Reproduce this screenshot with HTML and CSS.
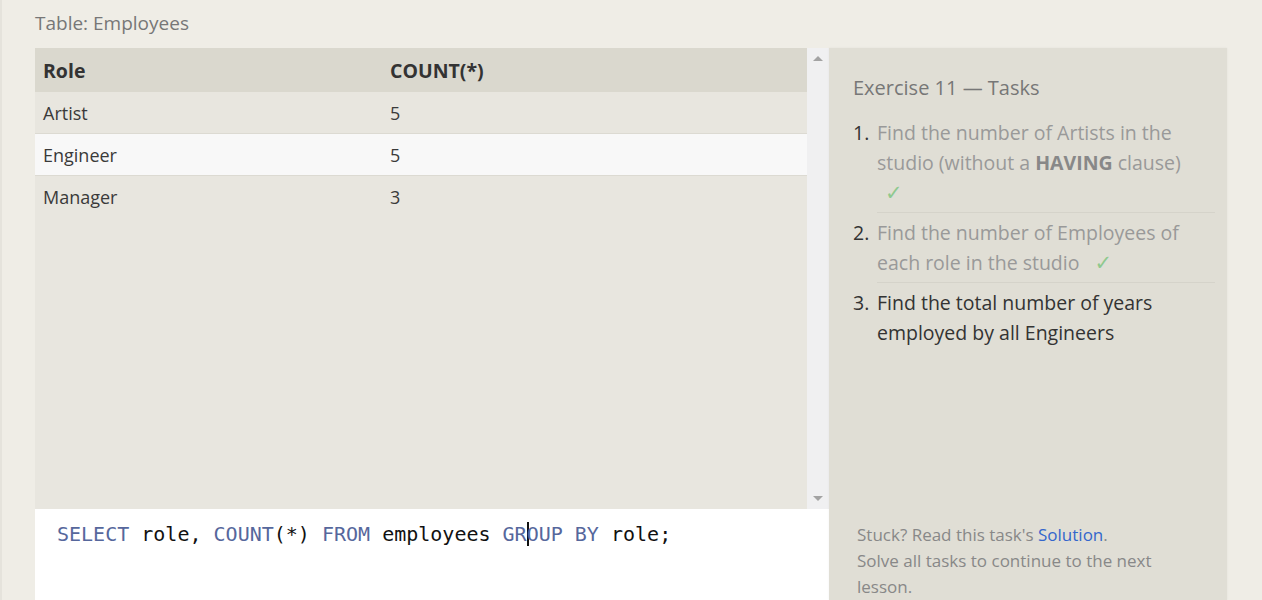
FILE: index.html
```html
<!DOCTYPE html>
<html>
<head>
<meta charset="utf-8">
<link rel="stylesheet" href="styles.css">
</head>
<body>
<div class="page">
  <div class="table-title">Table: Employees</div>
  <div class="workspace">
    <div class="left">
      <div class="results">
        <div class="table-wrap">
          <table class="grid">
            <thead>
              <tr><th class="c1">Role</th><th>COUNT(*)</th></tr>
            </thead>
            <tbody>
              <tr><td>Artist</td><td>5</td></tr>
              <tr class="hl"><td>Engineer</td><td>5</td></tr>
              <tr><td>Manager</td><td>3</td></tr>
            </tbody>
          </table>
        </div>
        <div class="scrollbar">
          <span class="arrow up"></span>
          <span class="arrow down"></span>
        </div>
      </div>
      <div class="editor">
        <div class="code"><span class="kw">SELECT</span> role, <span class="kw">COUNT</span>(*) <span class="kw">FROM</span> employees <span class="kw">GR<span class="cursor"></span>OUP</span> <span class="kw">BY</span> role;</div>
      </div>
    </div>
    <div class="panel">
      <div class="panel-title">Exercise 11 — Tasks</div>
      <ol class="tasks">
        <li class="done"><span class="num">1.</span><span class="txt">Find the number of Artists in the studio (without a <b>HAVING</b> clause)<br><span class="check">✓</span></span></li>
        <li class="done"><span class="num">2.</span><span class="txt">Find the number of Employees of each role in the studio <span class="check sp">✓</span></span></li>
        <li class="todo"><span class="num">3.</span><span class="txt">Find the total number of years employed by all Engineers</span></li>
      </ol>
      <div class="footer">
        Stuck? Read this task's <a class="link">Solution</a>.<br>
        Solve all tasks to continue to the next lesson.
      </div>
    </div>
  </div>
</div>
</body>
</html>
```
FILE: styles.css
```css
html, body {
  margin: 0;
  padding: 0;
  background: #efede6;
  overflow: hidden;
}
body {
  font-family: "Open Sans", "Liberation Sans", sans-serif;
  color: #333;
  border-left: 2px solid #e5e3dc;
  height: 600px;
}
.page {
  padding-left: 33px;
}
.table-title {
  font-size: 19px;
  line-height: 26px;
  color: #777;
  padding-top: 10px;
  height: 38px;
}
.workspace {
  display: flex;
  align-items: stretch;
}
.left {
  width: 794px;
  display: flex;
  flex-direction: column;
}
.results {
  display: flex;
  height: 461px;
  background: #e8e6df;
}
.table-wrap {
  width: 772px;
}
.grid {
  width: 100%;
  border-collapse: collapse;
  font-size: 18px;
}
.grid th {
  background: #dad8ce;
  text-align: left;
  font-weight: 700;
  font-size: 19.5px;
  height: 44px;
  padding: 0 8px;
  color: #333;
}
.grid th.c1 {
  width: 331px;
}
.grid td {
  height: 41px;
  padding: 0 8px;
  border-bottom: 1px solid #dcdad2;
  color: #3a3a3a;
}
.grid tr:last-child td {
  border-bottom: none;
}
.grid tr.hl td {
  background: #f8f8f8;
}
.scrollbar {
  width: 22px;
  background: #f0f0f1;
  display: flex;
  flex-direction: column;
  justify-content: space-between;
  align-items: center;
  padding: 8px 0;
  box-sizing: border-box;
}
.arrow {
  width: 0;
  height: 0;
  border-left: 5px solid transparent;
  border-right: 5px solid transparent;
}
.arrow.up {
  border-bottom: 5px solid #a3a3a3;
}
.arrow.down {
  border-top: 5px solid #a3a3a3;
}
.editor {
  background: #fff;
  height: 91px;
  padding: 12px 22px;
  box-sizing: border-box;
}
.code {
  font-family: "DejaVu Sans Mono", "Liberation Mono", monospace;
  font-size: 20px;
  line-height: 26px;
  color: #111;
  white-space: pre;
}
.kw {
  color: #56679c;
}
.cursor {
  display: inline-block;
  width: 2px;
  height: 24px;
  background: #111;
  vertical-align: -5px;
  margin-right: -2px;
}
.panel {
  width: 398px;
  background: #e0ded5;
  padding: 25px 12px 0 24px;
  box-sizing: border-box;
  box-shadow: 0 0 2px rgba(0,0,0,0.06);
  display: flex;
  flex-direction: column;
}
.panel-title {
  font-size: 20px;
  line-height: 30px;
  color: #777;
  margin-bottom: 9px;
}
.tasks {
  list-style: none;
  margin: 0;
  padding: 0;
  font-size: 19.5px;
  line-height: 30px;
}
.tasks li {
  display: flex;
  padding: 6px 0 4px;
}
.tasks li + li {
  position: relative;
}
.tasks li + li::before {
  content: "";
  position: absolute;
  top: 0;
  left: 24px;
  right: 0;
  border-top: 1px solid #d5d3ca;
}
.num {
  width: 24px;
  flex: none;
  color: #333;
}
.txt {
  flex: 1;
}
.done .txt {
  color: #999;
}
.done .txt b {
  color: #888;
}
.todo .txt {
  color: #333;
}
.check {
  font-family: "DejaVu Sans", sans-serif;
  color: #8fc98f;
  font-size: 21px;
  line-height: 30px;
  display: inline-block;
  padding-left: 8px;
}
.check.sp {
  padding-left: 10px;
}
.footer {
  margin-top: auto;
  font-size: 17px;
  line-height: 26px;
  color: #888;
  padding-left: 4px;
  width: 320px;
}
.link {
  color: #3366cc;
}
```
